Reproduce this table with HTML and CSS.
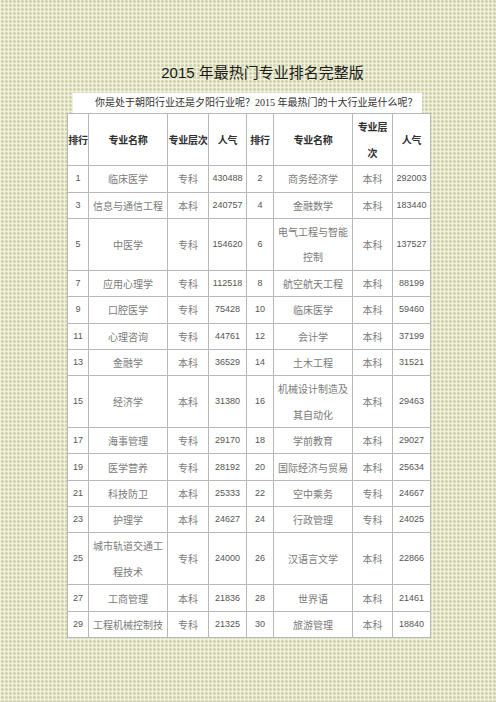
FILE: index.html
```html
<!DOCTYPE html>
<html lang="zh">
<head>
<meta charset="utf-8">
<title>2015年最热门专业排名完整版</title>
<link rel="stylesheet" href="styles.css">
</head>
<body>
<div class="doc">
  <h1 class="title">2015 年最热门专业排名完整版</h1>
  <p class="intro">你是处于朝阳行业还是夕阳行业呢？2015 年最热门的十大行业是什么呢？</p>
  <table class="rank">
    <colgroup>
      <col class="c-rank"><col class="c-name"><col class="c-level"><col class="c-pop">
      <col class="c-rank2"><col class="c-name"><col class="c-level2"><col class="c-pop">
    </colgroup>
    <thead>
      <tr class="dbl">
        <th>排行</th><th>专业名称</th><th class="nw">专业层次</th><th>人气</th>
        <th>排行</th><th>专业名称</th><th>专业层<br>次</th><th>人气</th>
      </tr>
    </thead>
    <tbody>
      <tr><td class="n">1</td><td>临床医学</td><td>专科</td><td class="n">430488</td><td class="n">2</td><td>商务经济学</td><td>本科</td><td class="n">292003</td></tr>
      <tr><td class="n">3</td><td>信息与通信工程</td><td>本科</td><td class="n">240757</td><td class="n">4</td><td>金融数学</td><td>本科</td><td class="n">183440</td></tr>
      <tr class="dbl"><td class="n">5</td><td>中医学</td><td>专科</td><td class="n">154620</td><td class="n">6</td><td>电气工程与智能<br>控制</td><td>本科</td><td class="n">137527</td></tr>
      <tr><td class="n">7</td><td>应用心理学</td><td>专科</td><td class="n">112518</td><td class="n">8</td><td>航空航天工程</td><td>本科</td><td class="n">88199</td></tr>
      <tr><td class="n">9</td><td>口腔医学</td><td>专科</td><td class="n">75428</td><td class="n">10</td><td>临床医学</td><td>本科</td><td class="n">59460</td></tr>
      <tr><td class="n">11</td><td>心理咨询</td><td>专科</td><td class="n">44761</td><td class="n">12</td><td>会计学</td><td>本科</td><td class="n">37199</td></tr>
      <tr><td class="n">13</td><td>金融学</td><td>本科</td><td class="n">36529</td><td class="n">14</td><td>土木工程</td><td>本科</td><td class="n">31521</td></tr>
      <tr class="dbl"><td class="n">15</td><td>经济学</td><td>本科</td><td class="n">31380</td><td class="n">16</td><td>机械设计制造及<br>其自动化</td><td>本科</td><td class="n">29463</td></tr>
      <tr><td class="n">17</td><td>海事管理</td><td>专科</td><td class="n">29170</td><td class="n">18</td><td>学前教育</td><td>本科</td><td class="n">29027</td></tr>
      <tr><td class="n">19</td><td>医学营养</td><td>专科</td><td class="n">28192</td><td class="n">20</td><td>国际经济与贸易</td><td>本科</td><td class="n">25634</td></tr>
      <tr><td class="n">21</td><td>科技防卫</td><td>本科</td><td class="n">25333</td><td class="n">22</td><td>空中乘务</td><td>专科</td><td class="n">24667</td></tr>
      <tr><td class="n">23</td><td>护理学</td><td>本科</td><td class="n">24627</td><td class="n">24</td><td>行政管理</td><td>专科</td><td class="n">24025</td></tr>
      <tr class="dbl"><td class="n">25</td><td>城市轨道交通工<br>程技术</td><td>专科</td><td class="n">24000</td><td class="n">26</td><td>汉语言文学</td><td>本科</td><td class="n">22866</td></tr>
      <tr><td class="n">27</td><td>工商管理</td><td>本科</td><td class="n">21836</td><td class="n">28</td><td>世界语</td><td>本科</td><td class="n">21461</td></tr>
      <tr><td class="n">29</td><td>工程机械控制技</td><td>专科</td><td class="n">21325</td><td class="n">30</td><td>旅游管理</td><td>本科</td><td class="n">18840</td></tr>
    </tbody>
  </table>
</div>
</body>
</html>
```

FILE: styles.css
```css
html {
  background-color: #dddfc0;
  background-image:
    linear-gradient(90deg, rgba(245, 246, 226, 0.8) 1px, transparent 1px),
    linear-gradient(0deg, rgba(245, 246, 226, 0.8) 1px, transparent 1px),
    linear-gradient(90deg, transparent 2px, rgba(190, 192, 152, 0.35) 2px, rgba(190, 192, 152, 0.35) 3px, transparent 3px),
    linear-gradient(0deg, transparent 2px, rgba(190, 192, 152, 0.35) 2px, rgba(190, 192, 152, 0.35) 3px, transparent 3px);
  background-size: 4px 4px, 4px 4px, 4px 4px, 4px 4px;
  min-height: 100%;
}

body {
  margin: 0;
  font-family: "Noto Sans CJK SC", "Noto Sans", sans-serif;
}

.doc {
  margin-left: 67px;
  width: 363px;
  padding-top: 63px;
}

.title {
  margin: 0;
  padding-left: 28px;
  font-size: 15px;
  line-height: 20px;
  font-weight: normal;
  color: #1a1a1a;
  text-align: center;
  white-space: nowrap;
  font-family: "Liberation Sans", "Noto Sans CJK SC", sans-serif;
}

.intro {
  margin: 10px 0 0 6px;
  width: 327px;
  height: 20px;
  padding-left: 22px;
  background: #ffffff;
  font-size: 10px;
  line-height: 20px;
  color: #333333;
  white-space: nowrap;
  font-family: "Liberation Serif", "Noto Sans CJK SC", serif;
}

.rank {
  width: 363px;
  table-layout: fixed;
  border-collapse: collapse;
  background: #ffffff;
  border: 1px solid #b8b8b8;
}

.c-rank { width: 21px; }
.c-name { width: 79px; }
.c-level { width: 41px; }
.c-pop { width: 38px; }
.c-rank2 { width: 27px; }
.c-level2 { width: 40px; }

.rank th,
.rank td {
  border: 1px solid #b8b8b8;
  padding: 0;
  text-align: center;
  vertical-align: middle;
  white-space: nowrap;
  overflow: visible;
  font-size: 10px;
  line-height: 25px;
}

.rank tr { height: 26.2px; }
.rank tr.dbl { height: 52.4px; }
.rank tr.dbl td,
.rank tr.dbl th { line-height: 25.5px; }

.rank th {
  font-weight: bold;
  color: #2e2e2e;
  letter-spacing: -0.2px;
}

.rank td {
  color: #7a7a7a;
}

.rank td.n {
  font-family: "Liberation Sans", sans-serif;
  font-size: 9px;
  color: #555555;
}
```
